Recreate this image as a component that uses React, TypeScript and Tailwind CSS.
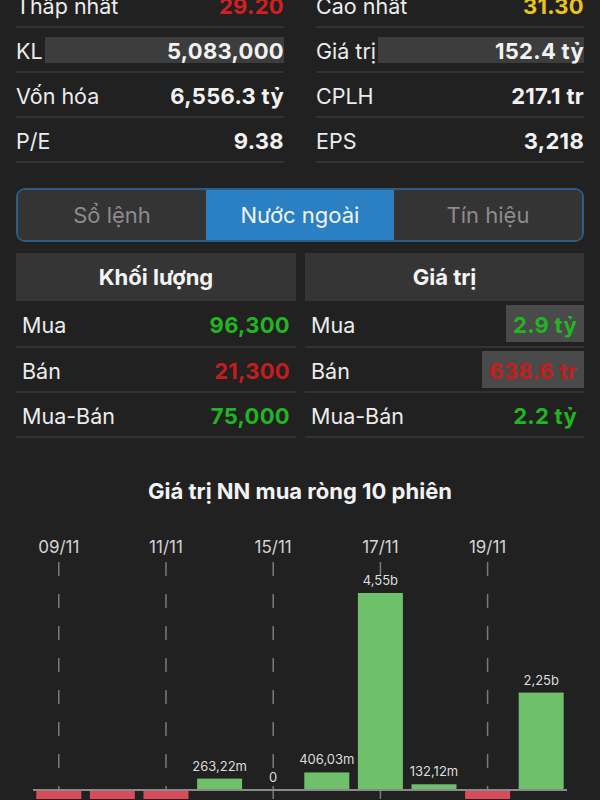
import React from "react";

const font = "font-['Inter','Noto_Sans',sans-serif]";

type TopRow = { label: string; value: string; color?: string; bar?: boolean };

const leftTop: TopRow[] = [
  { label: "Thấp nhất", value: "29.20", color: "text-[#d21f1f]" },
  { label: "KL", value: "5,083,000", bar: true },
  { label: "Vốn hóa", value: "6,556.3 tỷ" },
  { label: "P/E", value: "9.38" },
];
const rightTop: TopRow[] = [
  { label: "Cao nhất", value: "31.30", color: "text-[#ecc21c]" },
  { label: "Giá trị", value: "152.4 tỷ", bar: true },
  { label: "CPLH", value: "217.1 tr" },
  { label: "EPS", value: "3,218" },
];

function TopCol({ rows }: { rows: TopRow[] }) {
  return (
    <div className="flex flex-col">
      {rows.map((r) => (
        <div
          key={r.label}
          className="h-[45px] flex items-center border-b-2 border-[#333333]"
        >
          <span className="pt-[3px] text-[21.5px] text-[#ececec] whitespace-nowrap">{r.label}</span>
          {r.bar ? (
            <div className="ml-[2px] flex-1 h-[26px] bg-[#3d3d3d] flex items-center justify-end">
              <span className="pt-[3px] text-[22px] tracking-[0.3px] font-bold text-[#f2f2f2]">{r.value}</span>
            </div>
          ) : (
            <span
              className={`pt-[3px] ml-auto text-[22px] tracking-[0.3px] font-bold ${r.color ?? "text-[#f2f2f2]"}`}
            >
              {r.value}
            </span>
          )}
        </div>
      ))}
    </div>
  );
}

type TRow = { label: string; value: string; color: string; box?: boolean };

function TableCol({ title, rows, right }: { title: string; rows: TRow[]; right?: boolean }) {
  return (
    <div className="flex flex-col">
      <div className="h-[48px] bg-[#353535] flex items-center justify-center text-[22px] font-bold text-[#f4f4f4]">
        {title}
      </div>
      {rows.map((r, i) => (
        <div
          key={r.label}
          className={`${i === 0 ? "h-[47px]" : "h-[45px]"} flex items-center border-b-2 border-[#333333] ${right ? "pl-[6px]" : "pl-[6px] pr-[6px]"}`}
        >
          <span className="pt-[4px] text-[21.5px] text-[#ececec]">{r.label}</span>
          {r.box ? (
            <span
              className={`ml-auto h-[37px] pt-[4px] px-[7px] bg-[#4a4a4a] flex items-center text-[22px] tracking-[0.3px] font-bold ${r.color}`}
            >
              {r.value}
            </span>
          ) : (
            <span
              className={`pt-[4px] ml-auto text-[22px] tracking-[0.3px] font-bold ${right ? "pr-[7px]" : ""} ${r.color}`}
            >
              {r.value}
            </span>
          )}
        </div>
      ))}
    </div>
  );
}

const green = "text-[#22b522]";
const red = "text-[#c41d1d]";

function Chart() {
  const base = 271;
  const step = 53.6;
  const c0 = 58.8;
  const bw = 45;
  const bars: { v: number; label?: string }[] = [
    { v: -30 },
    { v: -30 },
    { v: -30 },
    { v: 263.22, label: "263,22m" },
    { v: 0, label: "0" },
    { v: 406.03, label: "406,03m" },
    { v: 4550, label: "4,55b" },
    { v: 132.12, label: "132,12m" },
    { v: -30 },
    { v: 2250, label: "2,25b" },
  ];
  const scale = 197 / 4550;
  const dates = ["09/11", "11/11", "15/11", "17/11", "19/11"];
  return (
    <svg width="600" height="280" viewBox="0 0 600 280" className="block">
      {dates.map((d, i) => {
        const x = c0 + step * 2 * i;
        return (
          <g key={d}>
            <text
              x={x}
              y={34}
              textAnchor="middle"
              fontSize="17"
              fill="#d4d4d4"
              fontFamily="Inter, sans-serif"
            >
              {d}
            </text>
            <line
              x1={x}
              x2={x}
              y1={43}
              y2={280}
              stroke="#7a7a7a"
              strokeWidth="1.5"
              strokeDasharray="14 18"
            />
          </g>
        );
      })}
      {bars.map((b, i) => {
        const cx = c0 + step * i;
        const x = cx - bw / 2;
        if (b.v < 0) {
          return <rect key={i} x={x} y={base + 1} width={bw} height={20} fill="#d84c5c" />;
        }
        const h = b.v * scale;
        return (
          <g key={i}>
            {h > 0 && <rect x={x} y={base - h} width={bw} height={h} fill="#6ec06a" />}
            {b.label && (
              <text
                x={cx}
                y={b.v === 0 ? 263 : base - h - 8}
                textAnchor="middle"
                fontSize="13"
                fill="#dcdcdc"
                fontFamily="Inter, sans-serif"
              >
                {b.label}
              </text>
            )}
          </g>
        );
      })}
      <line x1={33} x2={567} y1={base} y2={base} stroke="#8a8a8a" strokeWidth="2" />
    </svg>
  );
}

export default function App() {
  return (
    <div className={`w-[600px] h-[800px] overflow-hidden bg-[#212121] ${font}`}>
      <div className="mt-[-17px] px-4 grid grid-cols-2 gap-x-8">
        <TopCol rows={leftTop} />
        <TopCol rows={rightTop} />
      </div>

      <div className="mx-4 mt-[25px] h-[54px] rounded-[9px] border-2 border-[#2d5c84] overflow-hidden flex">
        <div className="flex-1 bg-[#343434] flex items-center justify-center text-[22px] text-[#8c8c8c]">
          Sổ lệnh
        </div>
        <div className="flex-1 bg-[#2a80c2] flex items-center justify-center text-[22px] text-[#f4f4f4]">
          Nước ngoài
        </div>
        <div className="flex-1 bg-[#343434] flex items-center justify-center text-[22px] text-[#8c8c8c]">
          Tín hiệu
        </div>
      </div>

      <div className="mt-[11px] pl-4 pr-4 grid grid-cols-[280px_1fr] gap-x-[9px]">
        <TableCol
          title="Khối lượng"
          rows={[
            { label: "Mua", value: "96,300", color: green },
            { label: "Bán", value: "21,300", color: red },
            { label: "Mua-Bán", value: "75,000", color: green },
          ]}
        />
        <TableCol
          right
          title="Giá trị"
          rows={[
            { label: "Mua", value: "2.9 tỷ", color: green, box: true },
            { label: "Bán", value: "638.6 tr", color: red, box: true },
            { label: "Mua-Bán", value: "2.2 tỷ", color: green },
          ]}
        />
      </div>

      <div className="mt-[25px] h-[56px] flex items-center justify-center text-[22px] font-bold text-[#f2f2f2]">
        Giá trị NN mua ròng 10 phiên
      </div>
      <Chart />
    </div>
  );
}
